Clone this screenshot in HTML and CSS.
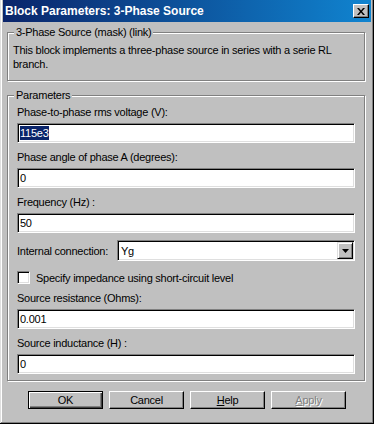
FILE: index.html
```html
<!DOCTYPE html>
<html lang="en">
<head>
  <meta charset="UTF-8" />
  <title>Block Parameters: 3-Phase Source</title>
  <link rel="stylesheet" href="styles.css">
</head>
<body>
  <div class="window">
    <div class="titlebar">
      <span class="title">Block Parameters: 3-Phase Source</span>
      <button class="close-btn" type="button">
        <svg width="8" height="7" viewBox="0 0 8 7"><path d="M0 0h2l2 2.5L6 0h2L5 3.5 8 7H6L4 4.5 2 7H0l3-3.5z" fill="#000"/></svg>
      </button>
    </div>

    <div class="content">
      <div class="group">
        <div class="legend"><span>3-Phase Source (mask) (link)</span></div>
        <p class="desc">This block implements a three-phase source in series with a serie RL branch.</p>
      </div>

      <div class="group params">
        <div class="legend"><span>Parameters</span></div>
        <div class="fields">
          <div class="field">
            <label>Phase-to-phase rms voltage (V):</label>
            <div class="edit"><span class="selected">115e3</span></div>
          </div>
          <div class="field">
            <label>Phase angle of phase A (degrees):</label>
            <div class="edit">0</div>
          </div>
          <div class="field">
            <label>Frequency (Hz) :</label>
            <div class="edit">50</div>
          </div>
          <div class="combo-row">
            <label>Internal connection:</label>
            <div class="combo">
              <span class="combo-value">Yg</span>
              <span class="combo-arrow">
                <svg width="7" height="4" viewBox="0 0 7 4"><path d="M0 0h7L3.5 4z" fill="#000"/></svg>
              </span>
            </div>
          </div>
          <div class="check-row">
            <span class="checkbox"></span>
            <span>Specify impedance using short-circuit level</span>
          </div>
          <div class="field">
            <label>Source resistance (Ohms):</label>
            <div class="edit">0.001</div>
          </div>
          <div class="field">
            <label>Source inductance (H) :</label>
            <div class="edit">0</div>
          </div>
        </div>
      </div>

      <div class="buttons">
        <button type="button" class="btn default">OK</button>
        <button type="button" class="btn">Cancel</button>
        <button type="button" class="btn"><u>H</u>elp</button>
        <button type="button" class="btn" disabled><u>A</u>pply</button>
      </div>
    </div>
  </div>
</body>
</html>
```

FILE: styles.css
```css
* {
  margin: 0;
  padding: 0;
  box-sizing: border-box;
}

body {
  background: #c0c0c0;
  font-family: 'Liberation Sans', Arial, sans-serif;
  font-size: 11px;
  letter-spacing: -0.25px;
  color: #000;
}

.window {
  width: 374px;
  height: 424px;
  background: #c0c0c0;
  padding: 0 3px 3px 3px;
  box-shadow:
    inset -1px -1px 0 #000,
    inset 1px 0 0 #dfdfdf,
    inset -2px -2px 0 #808080,
    inset 2px 0 0 #fff;
}

.titlebar {
  height: 22px;
  display: flex;
  align-items: center;
  justify-content: space-between;
  padding: 0 2px;
  background: linear-gradient(to right, #0a246a, #1084d0);
}

.title {
  color: #fff;
  font-weight: bold;
  font-size: 12px;
  letter-spacing: 0;
}

.close-btn {
  width: 16px;
  height: 14px;
  display: flex;
  align-items: center;
  justify-content: center;
  background: #c0c0c0;
  border: 1px solid;
  border-color: #fff #000 #000 #fff;
  box-shadow: inset -1px -1px 0 #808080;
}

.content {
  padding: 0 6px 0 4px;
}

.group {
  margin-top: 10px;
  border: 1px solid #808080;
  box-shadow: inset 1px 1px 0 #fff, 1px 1px 0 #fff;
}

.group.params {
  margin-top: 14px;
}

.legend {
  margin-top: -7px;
  padding-left: 6px;
  height: 13px;
  line-height: 13px;
}

.legend span {
  display: inline-block;
  padding: 0 2px;
  background: #c0c0c0;
}

.desc {
  margin: 4px 5px 9px 5px;
  line-height: 14px;
}

.fields {
  display: flex;
  flex-direction: column;
  padding: 4px 9px 6px 9px;
}

.field {
  display: flex;
  flex-direction: column;
  gap: 4px;
}

.field + .field {
  margin-top: 8px;
}

.field label {
  line-height: 13px;
}

.edit {
  height: 20px;
  line-height: 16px;
  padding: 1px 2px;
  background: #fff;
  border: 1px solid;
  border-color: #808080 #fff #fff #808080;
  box-shadow: inset 1px 1px 0 #000, inset -1px -1px 0 #dfdfdf;
}

.selected {
  display: inline-block;
  background: #0a246a;
  color: #fff;
  line-height: 14px;
  margin-top: 1px;
}

.combo-row {
  display: flex;
  align-items: center;
  margin-top: 7px;
}

.combo-row label {
  width: 100px;
}

.combo {
  flex: 1;
  height: 21px;
  display: flex;
  align-items: center;
  padding: 1px;
  background: #fff;
  border: 1px solid;
  border-color: #808080 #fff #fff #808080;
  box-shadow: inset 1px 1px 0 #000, inset -1px -1px 0 #dfdfdf;
}

.combo-value {
  flex: 1;
  padding-left: 2px;
}

.combo-arrow {
  width: 16px;
  height: 17px;
  display: flex;
  align-items: center;
  justify-content: center;
  background: #c0c0c0;
  border: 1px solid;
  border-color: #dfdfdf #000 #000 #dfdfdf;
  box-shadow: inset 1px 1px 0 #fff, inset -1px -1px 0 #808080;
}

.check-row {
  display: flex;
  align-items: center;
  gap: 6px;
  margin-top: 10px;
  height: 13px;
  margin-bottom: 8px;
}

.checkbox {
  width: 13px;
  height: 13px;
  background: #fff;
  border: 1px solid;
  border-color: #808080 #fff #fff #808080;
  box-shadow: inset 1px 1px 0 #000, inset -1px -1px 0 #dfdfdf;
}

.buttons {
  display: flex;
  justify-content: center;
  gap: 6px;
  margin-top: 10px;
  padding-left: 2px;
}

.btn {
  width: 75px;
  height: 18px;
  font-family: inherit;
  font-size: 11px;
  letter-spacing: -0.25px;
  color: #000;
  background: #c0c0c0;
  border: 1px solid;
  border-color: #fff #000 #000 #fff;
  box-shadow: inset -1px -1px 0 #808080;
}

.btn.default {
  border-color: #000;
  box-shadow: inset 1px 1px 0 #fff, inset -1px -1px 0 #404040, inset -2px -2px 0 #808080;
}

.btn:disabled {
  color: #808080;
  text-shadow: 1px 1px 0 #fff;
}
```
